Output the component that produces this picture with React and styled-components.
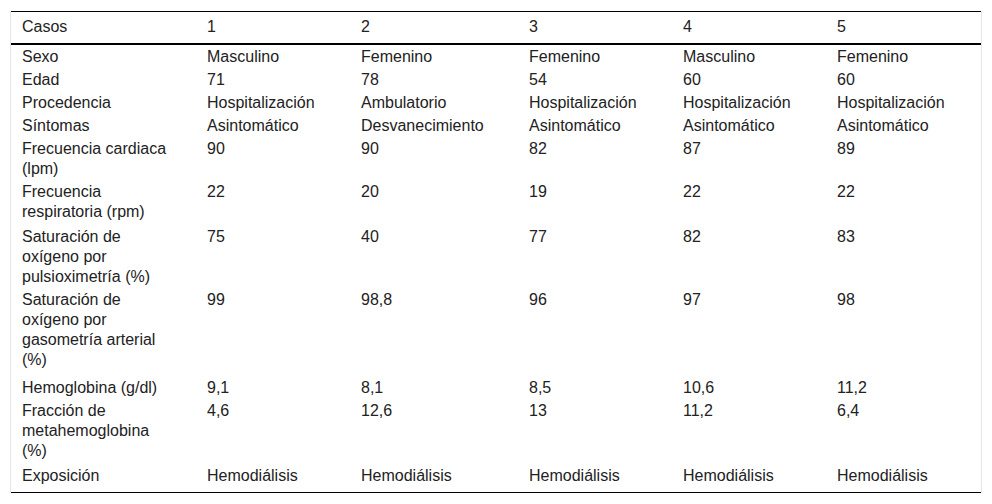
import React from "react";
import styled, { createGlobalStyle } from "styled-components";

const Global = createGlobalStyle`
  html, body { margin: 0; padding: 0; background: #fff; }
  body { font-family: "Liberation Sans", Arial, sans-serif; }
`;

const Page = styled.div`
  padding: 11px 0 0 10px;
`;

const Frame = styled.div`
  width: 970px;
  border-left: 1px solid #e6e6e6;
  border-right: 1px solid #e6e6e6;
`;

const Table = styled.table`
  width: 970px;
  table-layout: fixed;
  border-collapse: collapse;
  font-family: "Liberation Sans", Arial, sans-serif;
  font-size: 16px;
  line-height: 20px;
  color: #222;
  border-top: 1px solid #000;
  border-bottom: 1px solid #000;
`;

const HeadRow = styled.tr`
  border-bottom: 2px solid #000;
`;

const Th = styled.th`
  font-weight: normal;
  text-align: left;
  vertical-align: top;
  padding: 5px 11px 6px 11px;
  &:first-child { padding-right: 26px; }
`;

const Td = styled.td`
  text-align: left;
  vertical-align: top;
  padding: 1.5px 11px ${(p) => 1.5 + (p.$extra || 0)}px 11px;
  &:first-child { padding-right: 26px; }
`;

const widths = [185, 154, 168, 154, 154, 155];

const header = ["Casos", "1", "2", "3", "4", "5"];

const rows = [
  { extra: 0, cells: ["Sexo", "Masculino", "Femenino", "Femenino", "Masculino", "Femenino"] },
  { extra: 0, cells: ["Edad", "71", "78", "54", "60", "60"] },
  { extra: 0, cells: ["Procedencia", "Hospitalización", "Ambulatorio", "Hospitalización", "Hospitalización", "Hospitalización"] },
  { extra: 0, cells: ["Síntomas", "Asintomático", "Desvanecimiento", "Asintomático", "Asintomático", "Asintomático"] },
  { extra: 0, cells: ["Frecuencia cardiaca (lpm)", "90", "90", "82", "87", "89"] },
  { extra: 2, cells: ["Frecuencia respiratoria (rpm)", "22", "20", "19", "22", "22"] },
  { extra: 0, cells: ["Saturación de oxígeno por pulsioximetría (%)", "75", "40", "77", "82", "83"] },
  { extra: 5, cells: ["Saturación de oxígeno por gasometría arterial (%)", "99", "98,8", "96", "97", "98"] },
  { extra: 0, cells: ["Hemoglobina (g/dl)", "9,1", "8,1", "8,5", "10,6", "11,2"] },
  { extra: 2, cells: ["Fracción de metahemoglobina (%)", "4,6", "12,6", "13", "11,2", "6,4"] },
  { extra: 5, cells: ["Exposición", "Hemodiálisis", "Hemodiálisis", "Hemodiálisis", "Hemodiálisis", "Hemodiálisis"] },
];

export default function App() {
  return (
    <>
      <Global />
      <Page>
        <Frame>
          <Table>
            <colgroup>
              {widths.map((w, i) => (
                <col key={i} style={{ width: w }} />
              ))}
            </colgroup>
            <thead>
              <HeadRow>
                {header.map((h, i) => (
                  <Th key={i}>{h}</Th>
                ))}
              </HeadRow>
            </thead>
            <tbody>
              {rows.map((r, i) => (
                <tr key={i}>
                  {r.cells.map((c, j) => (
                    <Td key={j} $extra={r.extra}>{c}</Td>
                  ))}
                </tr>
              ))}
            </tbody>
          </Table>
        </Frame>
      </Page>
    </>
  );
}
